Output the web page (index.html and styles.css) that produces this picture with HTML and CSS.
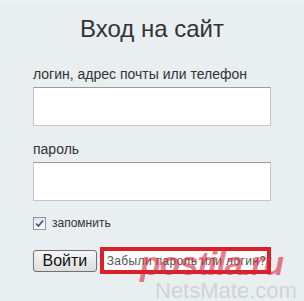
FILE: index.html
```html
<!DOCTYPE html>
<html lang="ru">
<head>
  <meta charset="UTF-8">
  <title>Вход на сайт</title>
  <link rel="stylesheet" href="styles.css">
</head>
<body>
  <div class="login">
    <h1 class="login-title">Вход на сайт</h1>

    <label class="field-label" for="login">логин, адрес почты или телефон</label>
    <input class="field" id="login" type="text">

    <label class="field-label" for="pass">пароль</label>
    <input class="field" id="pass" type="password">

    <label class="remember">
      <span class="check">
        <svg width="9" height="9" viewBox="0 0 9 9"><path d="M1 4.5 L3.5 7 L8 1.5" fill="none" stroke="#3b4f7a" stroke-width="1.6"/></svg>
      </span>
      запомнить
    </label>

    <div class="actions">
      <button class="btn">Войти</button>
      <a class="forgot" href="#">Забыли пароль или логин?</a>
    </div>
  </div>

  <!-- водяные знаки -->
  <div class="mark-postila">postila.ru</div>
  <div class="mark-nets">NetsMate.com</div>
</body>
</html>
```

FILE: styles.css
```css
body {
  margin: 0;
  background-color: #e9eef1;
  border-top: 3px solid #f0f3f5;
  font-family: 'Liberation Sans', Arial, sans-serif;
  height: 298px;
  overflow: hidden;
  position: relative;
}

.login {
  display: flex;
  flex-direction: column;
  padding: 12px 33px 0 33px;
}

.login-title {
  margin: 0 0 23px;
  font-size: 24px;
  font-weight: normal;
  color: #333;
  text-align: center;
}

.field-label {
  font-size: 14px;
  color: #333;
  margin-bottom: 5px;
}

.field {
  box-sizing: border-box;
  width: 238px;
  height: 39px;
  margin: 0 0 15px;
  border: 1px solid #c4c4c4;
  border-top-color: #9a9a9a;
  background: #fff;
}

.remember {
  display: flex;
  align-items: center;
  gap: 6px;
  font-size: 12px;
  color: #333;
}

.check {
  box-sizing: border-box;
  width: 13px;
  height: 13px;
  border: 1px solid #8a97a8;
  background: linear-gradient(#dfe6ee, #fff);
  display: flex;
  align-items: center;
  justify-content: center;
}

.actions {
  display: flex;
  align-items: center;
  margin-top: 17px;
}

.btn {
  width: 64px;
  height: 22px;
  padding: 0;
  font-family: inherit;
  font-size: 16px;
  color: #111;
  border: 1px solid #707070;
  border-radius: 3px;
  background: linear-gradient(#f6f6f6, #dedede);
}

.forgot {
  box-sizing: border-box;
  width: 172px;
  height: 27px;
  margin-left: 3px;
  padding: 3px 0 0 3px;
  border: 4px solid #d9202b;
  background: #fff;
  font-size: 12px;
  letter-spacing: 0.35px;
  color: #555;
  text-decoration: none;
  white-space: nowrap;
}

.mark-postila {
  position: absolute;
  left: 140px;
  top: 241px;
  font-size: 34px;
  font-weight: bold;
  font-style: italic;
  color: rgba(214, 40, 60, 0.6);
  letter-spacing: -1px;
}

.mark-nets {
  position: absolute;
  left: 155px;
  top: 277px;
  font-size: 22px;
  line-height: 1;
  color: rgba(160, 170, 180, 0.4);
}
```
